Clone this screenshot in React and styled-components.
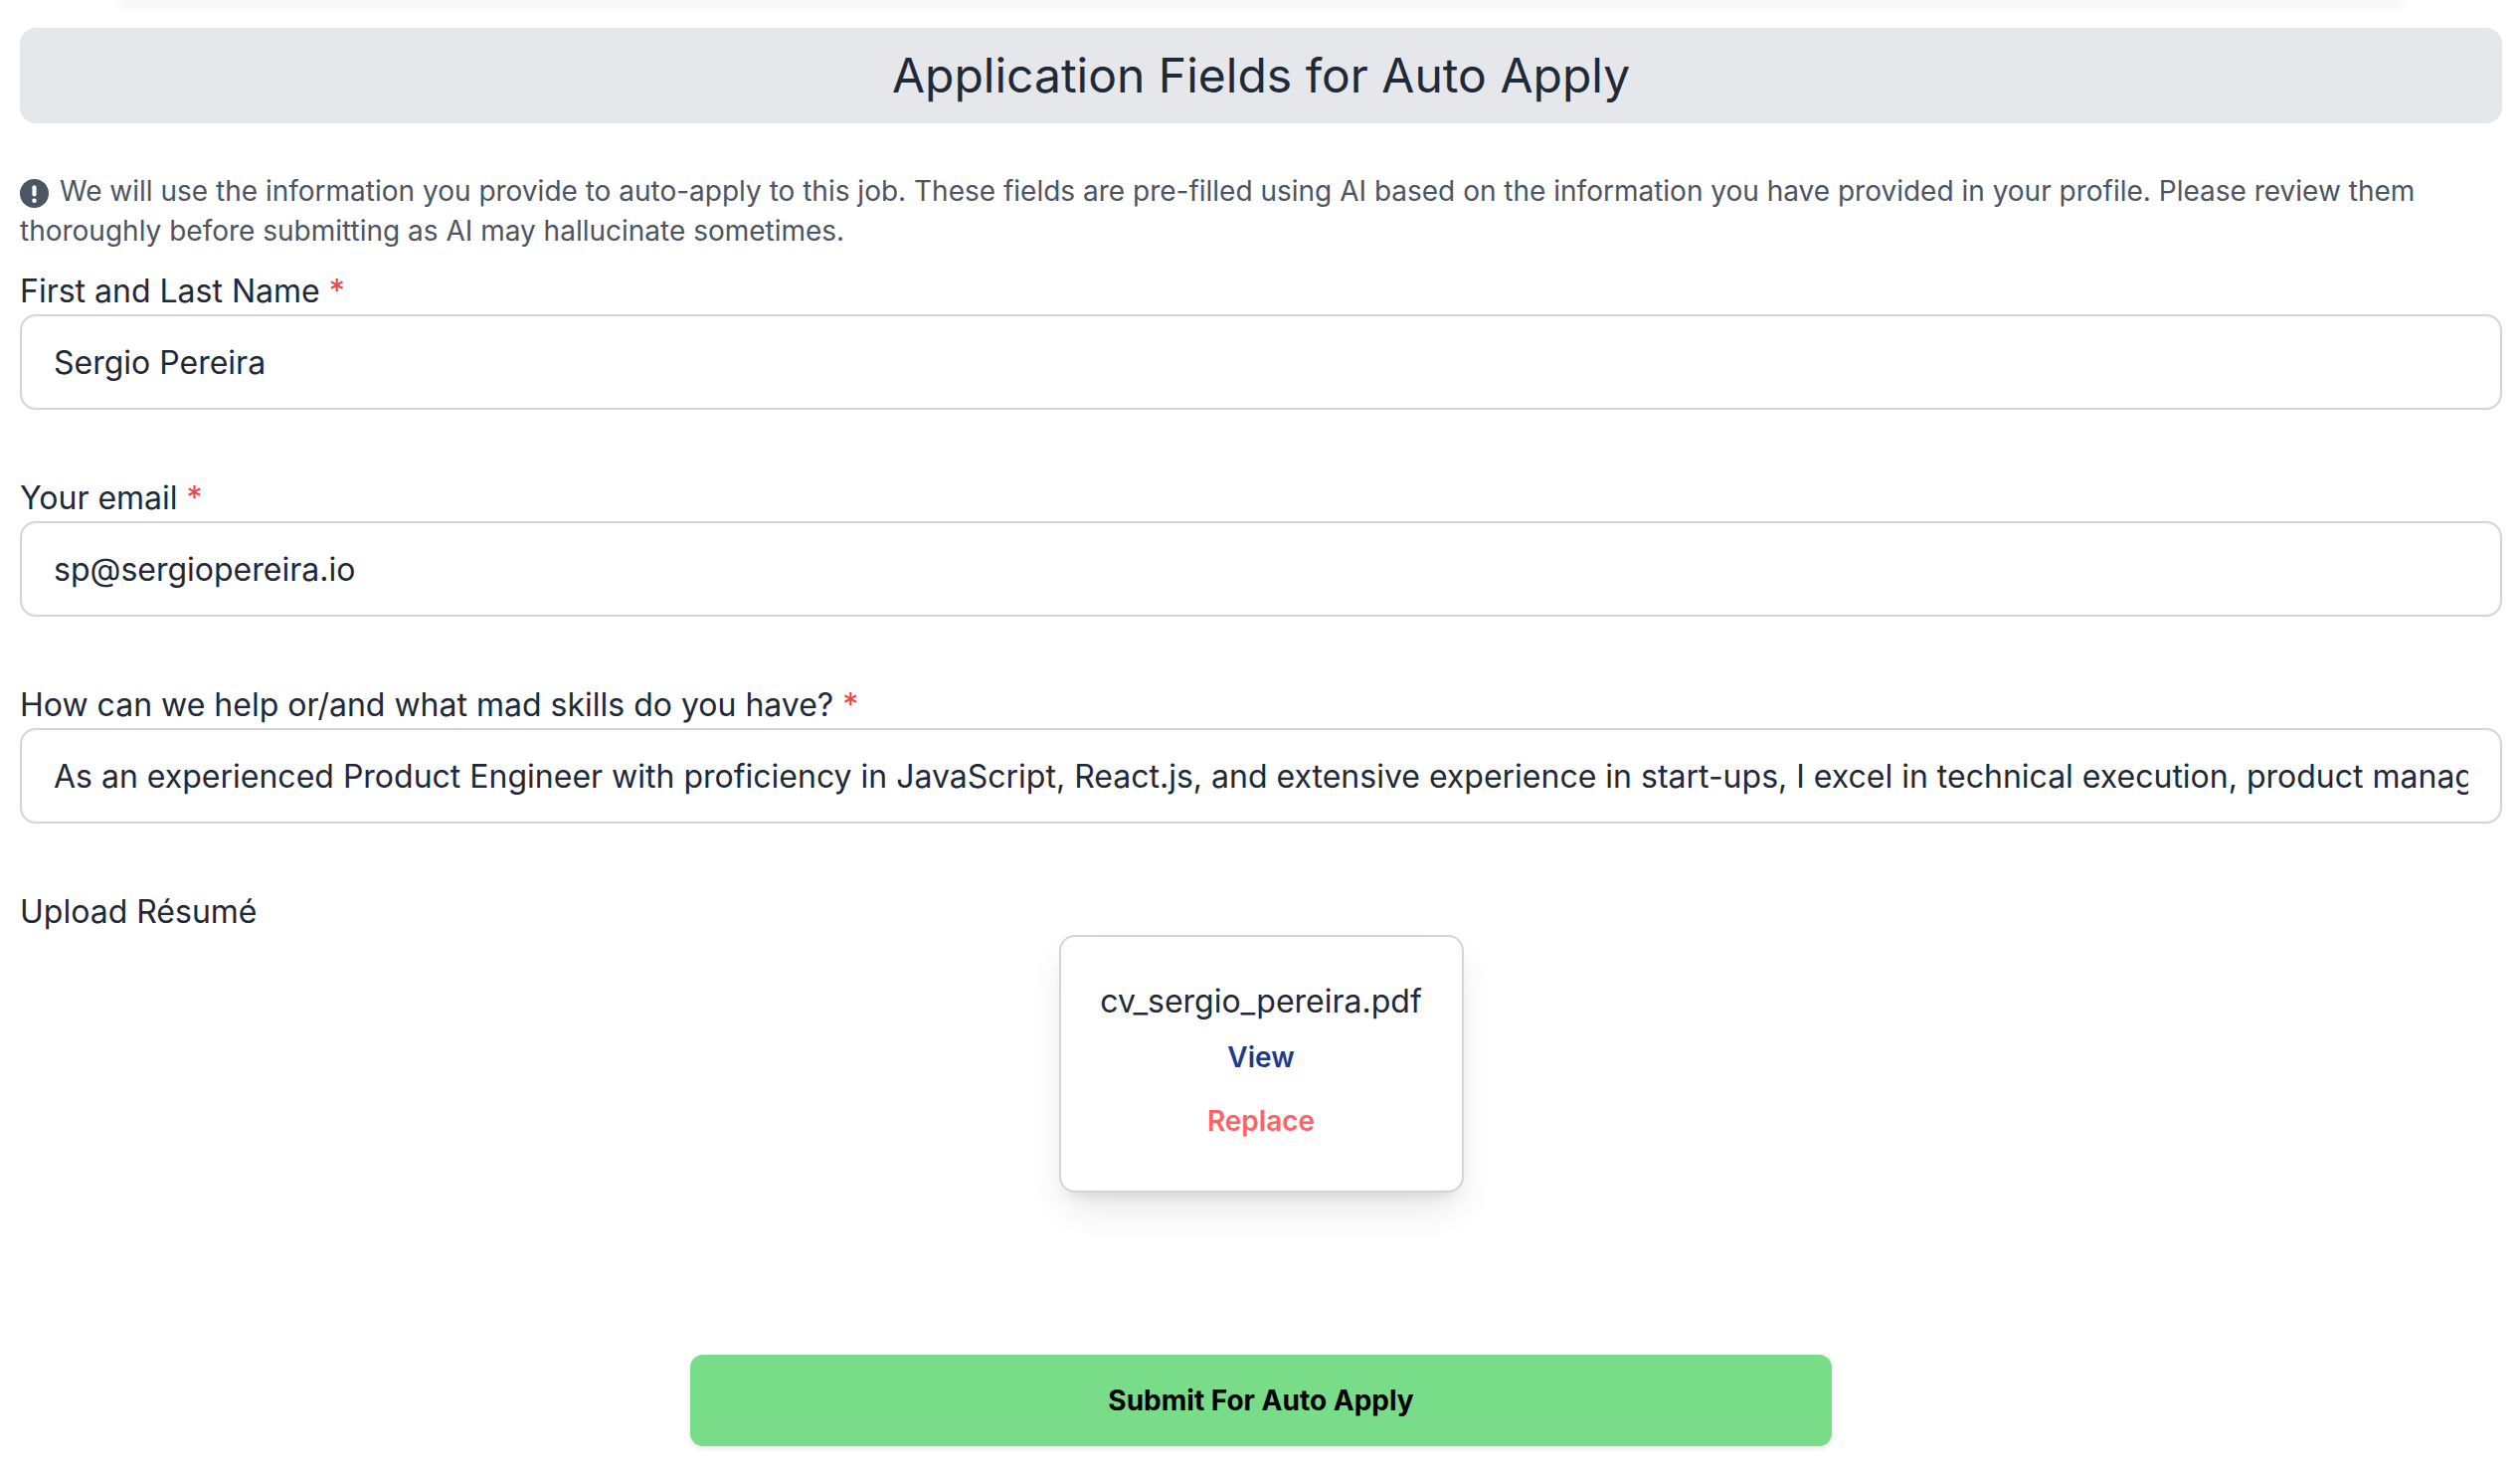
import styled, { createGlobalStyle } from "styled-components";

const GlobalStyle = createGlobalStyle`
  * {
    box-sizing: border-box;
  }
  body {
    margin: 0;
    background: #ffffff;
    font-family: "Inter", "Liberation Sans", sans-serif;
    overflow: hidden;
  }
`;

const Page = styled.div`
  display: flex;
  flex-direction: column;
  width: 2534px;
  height: 1486px;
  padding: 0 18px 0 20px;
`;

const TopCardEdge = styled.div`
  height: 2px;
  margin: -2px 100px 0 100px;
  box-shadow: 0 4px 10px rgba(0, 0, 0, 0.2);
`;

const Header = styled.h1`
  display: flex;
  align-items: center;
  justify-content: center;
  height: 96px;
  margin: 28px 0 0;
  padding-bottom: 2px;
  background: #e5e7eb;
  border-radius: 16px;
  color: #1f2937;
  font-size: 48px;
  font-weight: 400;
`;

const Notice = styled.p`
  margin: 48px 0 21px;
  color: #4b5563;
  font-size: 28px;
  line-height: 40px;
`;

const NoticeIcon = styled.svg`
  display: inline-block;
  width: 29px;
  height: 29px;
  margin: 0 11px 0 0;
  vertical-align: -7px;
`;

const Form = styled.form`
  display: flex;
  flex-direction: column;
`;

const Field = styled.div`
  display: flex;
  flex-direction: column;
  height: 208px;
`;

const Label = styled.label`
  height: 43px;
  color: #1f2937;
  font-size: 32px;
  line-height: 40px;
`;

const Required = styled.span`
  color: #ef4444;
`;

const TextInput = styled.input`
  width: 100%;
  height: 96px;
  padding: 0 32px;
  border: 2px solid #d1d5db;
  border-radius: 16px;
  background: #ffffff;
  color: #1f2937;
  font-family: inherit;
  font-size: 32px;
  outline: none;
`;

const UploadSection = styled.div`
  display: flex;
  flex-direction: column;
`;

const FileCard = styled.div`
  display: flex;
  flex-direction: column;
  align-items: center;
  align-self: center;
  width: 407px;
  height: 259px;
  padding-top: 45px;
  border: 2px solid #d1d5db;
  border-radius: 16px;
  background: #ffffff;
  box-shadow: 0 20px 40px -8px rgba(0, 0, 0, 0.12), 0 10px 16px -10px rgba(0, 0, 0, 0.12);
`;

const FileName = styled.div`
  color: #1f2937;
  font-size: 32px;
  line-height: 40px;
`;

const FileAction = styled.a`
  margin-top: ${({ $gap }) => $gap}px;
  color: ${({ $color }) => $color};
  font-size: 28px;
  font-weight: 600;
  line-height: 40px;
`;

const SubmitRow = styled.div`
  display: flex;
  justify-content: center;
  margin-top: 163px;
`;

const SubmitButton = styled.button`
  width: 1148px;
  height: 92px;
  border: none;
  border-radius: 13px;
  background: #79dc89;
  box-shadow: 0 2px 6px rgba(0, 0, 0, 0.1);
  color: #000000;
  font-family: inherit;
  font-size: 28px;
  font-weight: 700;
`;

const fields = [
  { label: "First and Last Name", value: "Sergio Pereira" },
  { label: "Your email", value: "sp@sergiopereira.io" },
  {
    label: "How can we help or/and what mad skills do you have?",
    value:
      "As an experienced Product Engineer with proficiency in JavaScript, React.js, and extensive experience in start-ups, I excel in technical execution, product management and shipping features end to end.",
  },
];

export default function App() {
  return (
    <Page>
      <GlobalStyle />
      <TopCardEdge />
      <Header>Application Fields for Auto Apply</Header>
      <Notice>
        <NoticeIcon viewBox="0 0 28 28">
          <circle cx="14" cy="14" r="14" fill="#4b5563" />
          <rect x="12" y="6" width="4" height="11" rx="2" fill="#ffffff" />
          <circle cx="14" cy="21" r="2.2" fill="#ffffff" />
        </NoticeIcon>
        We will use the information you provide to auto-apply to this job. These fields are pre-filled using AI based on
        the information you have provided in your profile. Please review them thoroughly before submitting as AI may
        hallucinate sometimes.
      </Notice>
      <Form>
        {fields.map((field) => (
          <Field key={field.label}>
            <Label>
              {field.label} <Required>*</Required>
            </Label>
            <TextInput readOnly value={field.value} />
          </Field>
        ))}
        <UploadSection>
          <Label>Upload Résumé</Label>
          <FileCard>
            <FileName>cv_sergio_pereira.pdf</FileName>
            <FileAction $color="#1e3a8a" $gap={16}>
              View
            </FileAction>
            <FileAction $color="#ff6166" $gap={24}>
              Replace
            </FileAction>
          </FileCard>
        </UploadSection>
        <SubmitRow>
          <SubmitButton type="button">Submit For Auto Apply</SubmitButton>
        </SubmitRow>
      </Form>
    </Page>
  );
}
